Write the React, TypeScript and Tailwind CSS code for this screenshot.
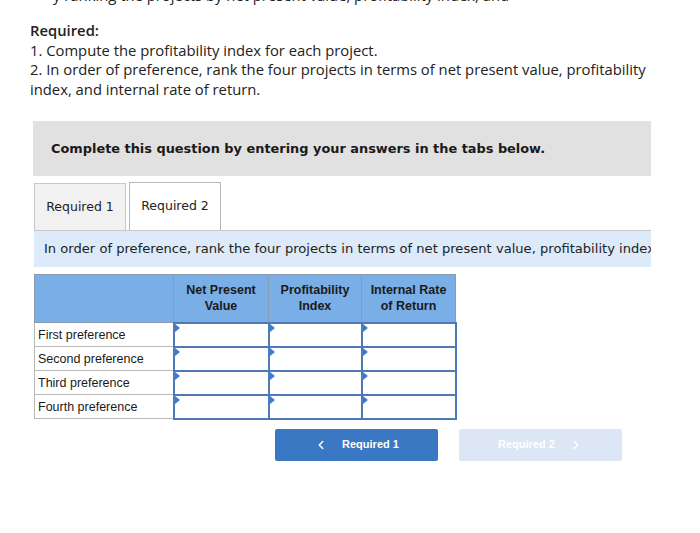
import { ChevronLeft, ChevronRight } from "lucide-react";

const rows = ["First preference", "Second preference", "Third preference", "Fourth preference"];
const cols = [
  { title: "Net Present", sub: "Value", w: "w-[95px]" },
  { title: "Profitability", sub: "Index", w: "w-[93px]" },
  { title: "Internal Rate", sub: "of Return", w: "w-[94px]" },
];

function InputCell({ w }: { w: string }) {
  return (
    <td className={`${w} h-[24px] p-0 border-2 border-[#4f79b4] bg-white relative`}>
      <span className="absolute left-0 top-0 w-0 h-0 border-t-[4px] border-b-[4px] border-l-[5px] border-t-transparent border-b-transparent border-l-[#3b7bd0]" />
    </td>
  );
}

export default function App() {
  return (
    <div className="w-[700px] h-[533px] bg-white overflow-hidden relative">
      <div className="pl-[30px] pr-[20px]">
        <p className="-mt-[15px] h-[20px] text-[14.8px] leading-[20px] text-[#222] font-['Open_Sans',sans-serif] overflow-hidden whitespace-nowrap">
          &nbsp;&nbsp;&nbsp;&nbsp;&nbsp;&nbsp;y ranking the projects by net present value, profitability index, and
        </p>
        <div className="mt-[16px] font-['Open_Sans',sans-serif] text-[14.8px] leading-[19.5px] text-[#222]">
          <div className="font-semibold">Required:</div>
          <div>1. Compute the profitability index for each project.</div>
          <div>
            2. In order of preference, rank the four projects in terms of net present value, profitability
            <br />
            index, and internal rate of return.
          </div>
        </div>

        <div className="ml-[3px] w-[618px] mt-[22px] h-[55px] bg-[#e1e1e1] flex items-center pl-[18px] font-['DejaVu_Sans',Verdana,sans-serif] text-[12.9px] font-bold text-[#1a1a1a]">
          Complete this question by entering your answers in the tabs below.
        </div>

        <div className="ml-[4px] w-[617px] mt-[6px]">
          <div className="flex items-end gap-[3px] h-[48px] font-['DejaVu_Sans',Verdana,sans-serif] text-[12.5px] text-[#222]">
            <div className="w-[92px] h-[47px] bg-[#f1f1f1] border border-b-0 border-[#c8c8c8] flex items-center justify-center">
              Required 1
            </div>
            <div className="w-[92px] h-[48px] bg-white border border-b-0 border-[#b8b8b8] flex items-center justify-center">
              Required 2
            </div>
          </div>
          <div className="h-[1px] bg-[#c9c9c9]" />
          <div className="h-[36px] bg-[#dceafa] flex items-center pl-[10px] overflow-hidden whitespace-nowrap font-['DejaVu_Sans',Verdana,sans-serif] text-[13.1px] text-[#222]">
            In order of preference, rank the four projects in terms of net present value, profitability index, and internal rate of return.
          </div>
        </div>

        <table className="ml-[4px] mt-[7px] border-collapse font-['Liberation_Sans',Arial,sans-serif] text-[#1a1a1a]">
          <thead>
            <tr className="bg-[#7aaee7] h-[48px]">
              <th className="w-[139px] border border-[#8a9bb0]" />
              {cols.map((c) => (
                <th
                  key={c.title}
                  className={`${c.w} border border-[#8a9bb0] text-[12.5px] leading-[16px] font-bold text-center align-middle`}
                >
                  {c.title}
                  <br />
                  {c.sub}
                </th>
              ))}
            </tr>
          </thead>
          <tbody>
            {rows.map((r) => (
              <tr key={r}>
                <td className="w-[139px] h-[24px] border border-[#b8b8b8] pl-[3px] text-[12.5px] leading-[20px]">
                  {r}
                </td>
                {cols.map((c) => (
                  <InputCell key={c.title} w={c.w} />
                ))}
              </tr>
            ))}
          </tbody>
        </table>

        <div className="flex mt-[9px] ml-[245px] gap-[21px] font-['Liberation_Sans',Arial,sans-serif] text-[11px] font-bold">
          <button className="w-[163px] h-[32px] rounded-[2px] bg-[#3a78c3] text-white flex items-center justify-center gap-[14px]">
            <ChevronLeft size={14} strokeWidth={2.5} />
            <span>Required 1</span>
          </button>
          <button className="w-[163px] h-[32px] rounded-[2px] bg-[#dce6f4] text-white flex items-center justify-center gap-[14px]">
            <span>Required 2</span>
            <ChevronRight size={14} strokeWidth={2.5} />
          </button>
        </div>
      </div>
    </div>
  );
}
